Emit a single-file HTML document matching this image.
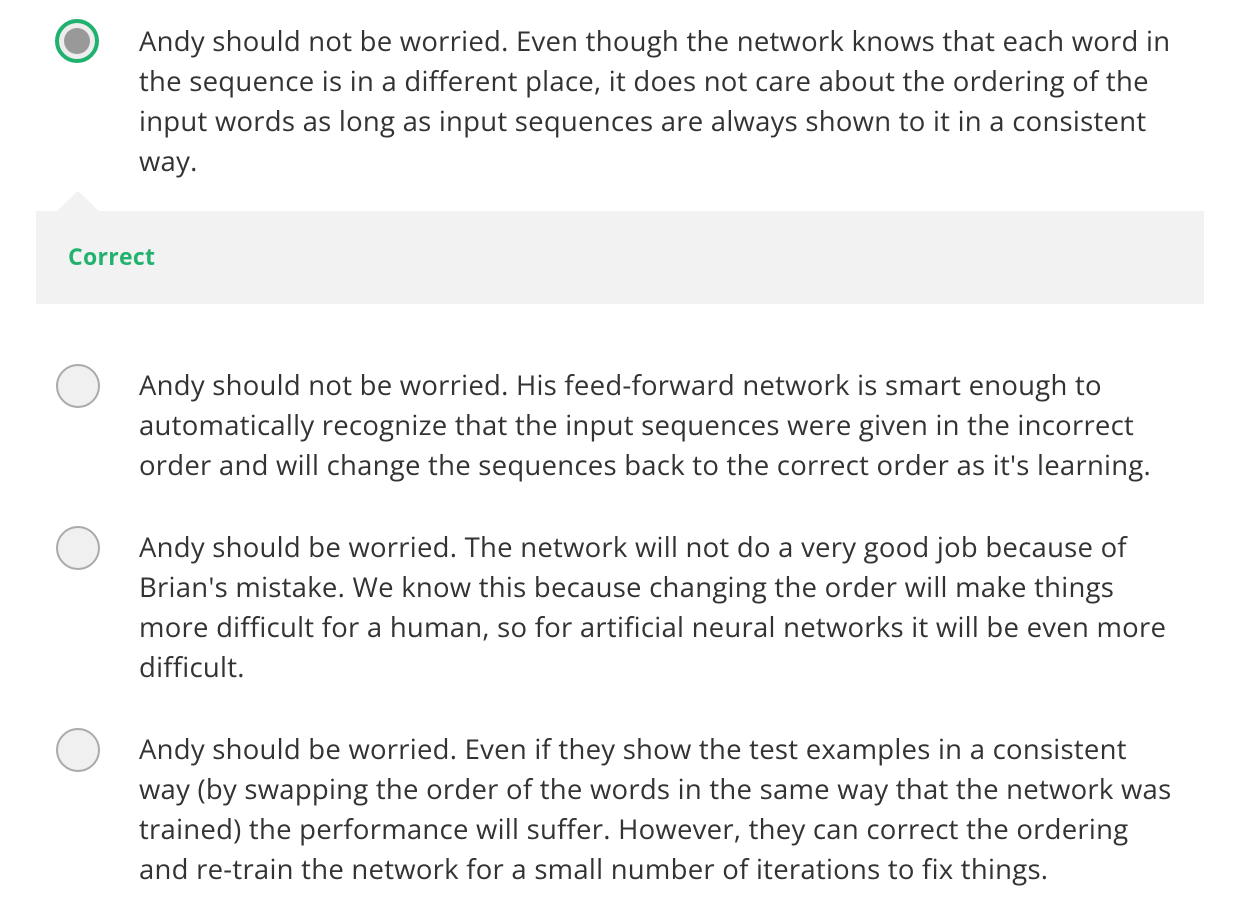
<!DOCTYPE html>
<html><head><style>
body{margin:0;background:#fff;width:1233px;height:917px;overflow:hidden;font-family:"Open Sans","Liberation Sans",sans-serif;color:#333;position:relative}
.t{position:absolute;left:139px;font-size:27.5px;line-height:40px;white-space:nowrap;letter-spacing:0.25px}
.r{position:absolute;left:56px;width:40px;height:40px;border-radius:50%;border:2px solid #aaa;background:#f0f0f0}
.sel{position:absolute;left:55px;top:19px;width:36px;height:36px;border-radius:50%;border:4px solid #1fb16e;background:#ededed}
.sel:after{content:"";position:absolute;left:5px;top:5px;width:26px;height:26px;border-radius:50%;background:#999}
.box{position:absolute;left:36px;top:211px;width:1168px;height:93px;background:#f2f2f2}
.tri{position:absolute;left:57px;top:191px;width:0;height:0;border-left:21px solid transparent;border-right:21px solid transparent;border-bottom:20px solid #f2f2f2}
.c{position:absolute;left:68px;top:240px;font-size:23px;font-weight:bold;color:#21b26e;letter-spacing:0.3px}
</style></head><body>
<div class="sel"></div>
<div class="t" style="top:22px">Andy should not be worried. Even though the network knows that each word in<br>the sequence is in a different place, it does not care about the ordering of the<br>input words as long as input sequences are always shown to it in a consistent<br>way.</div>
<div class="tri"></div>
<div class="box"></div>
<div class="c">Correct</div>
<div class="r" style="top:364px"></div>
<div class="t" style="top:366px">Andy should not be worried. His feed-forward network is smart enough to<br>automatically recognize that the input sequences were given in the incorrect<br>order and will change the sequences back to the correct order as it's learning.</div>
<div class="r" style="top:526px"></div>
<div class="t" style="top:528px">Andy should be worried. The network will not do a very good job because of<br>Brian's mistake. We know this because changing the order will make things<br>more difficult for a human, so for artificial neural networks it will be even more<br>difficult.</div>
<div class="r" style="top:728px"></div>
<div class="t" style="top:730px">Andy should be worried. Even if they show the test examples in a consistent<br>way (by swapping the order of the words in the same way that the network was<br>trained) the performance will suffer. However, they can correct the ordering<br>and re-train the network for a small number of iterations to fix things.</div>
</body></html>
